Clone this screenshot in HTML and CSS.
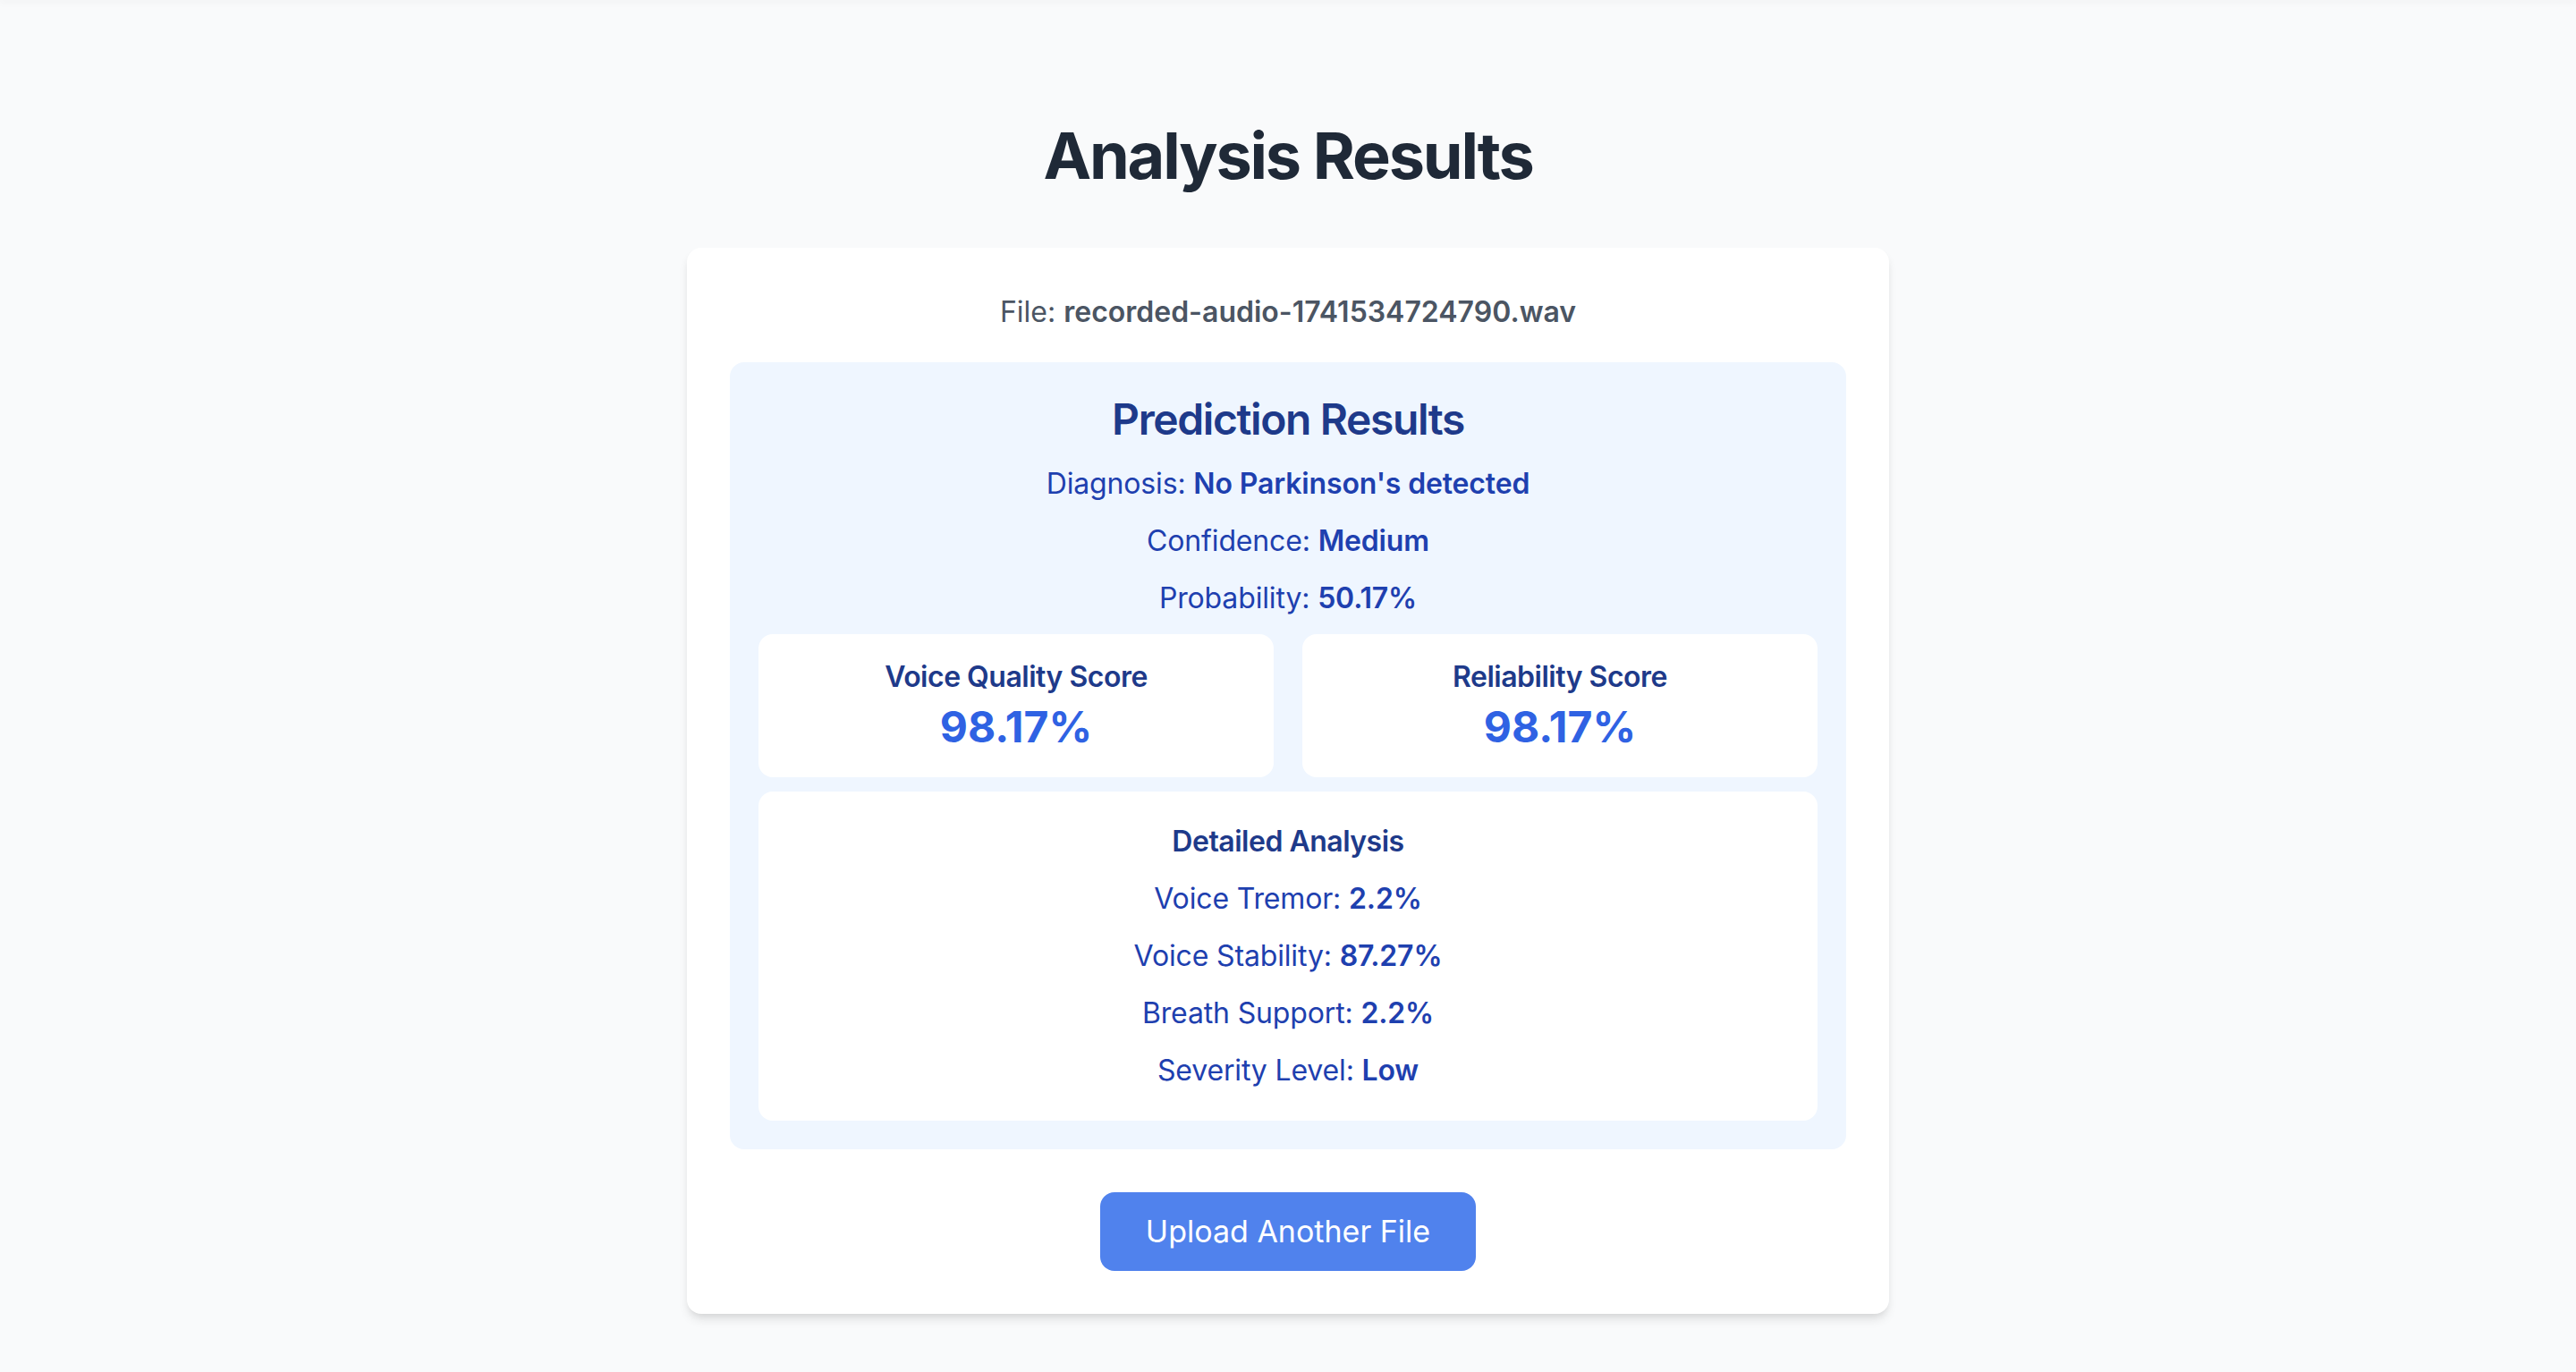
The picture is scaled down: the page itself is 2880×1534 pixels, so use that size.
FILE: index.html
```html
<!DOCTYPE html>
<html lang="en">
<head>
<meta charset="utf-8">
<title>Analysis Results</title>
<link rel="stylesheet" href="styles.css">
</head>
<body>
<div class="topbar"></div>
<main class="page">
  <h1 class="title">Analysis Results</h1>
  <section class="card">
    <p class="file">File: <strong>recorded-audio-1741534724790.wav</strong></p>
    <div class="results">
      <h2 class="results-title">Prediction Results</h2>
      <p class="line">Diagnosis: <strong>No Parkinson's detected</strong></p>
      <p class="line">Confidence: <strong>Medium</strong></p>
      <p class="line">Probability: <strong>50.17%</strong></p>
      <div class="scores">
        <div class="score">
          <div class="score-label">Voice Quality Score</div>
          <div class="score-value">98.17%</div>
        </div>
        <div class="score">
          <div class="score-label">Reliability Score</div>
          <div class="score-value">98.17%</div>
        </div>
      </div>
      <div class="details">
        <h3 class="details-title">Detailed Analysis</h3>
        <p class="line">Voice Tremor: <strong>2.2%</strong></p>
        <p class="line">Voice Stability: <strong>87.27%</strong></p>
        <p class="line">Breath Support: <strong>2.2%</strong></p>
        <p class="line">Severity Level: <strong>Low</strong></p>
      </div>
    </div>
    <div class="actions">
      <button class="btn" type="button">Upload Another File</button>
    </div>
  </section>
</main>
</body>
</html>
```

FILE: styles.css
```css
* { box-sizing: border-box; }

html, body {
  margin: 0;
  padding: 0;
}

body {
  background: #f9fafb;
  font-family: Inter, "Noto Sans", "Liberation Sans", sans-serif;
  min-height: 1534px;
}

.topbar {
  height: 0;
  box-shadow: 0 0 8px 2px rgba(0, 0, 0, 0.05);
}

.page {
  display: flex;
  flex-direction: column;
  align-items: center;
  padding-top: 134px;
}

.title {
  margin: 0 0 63px;
  font-size: 72px;
  line-height: 80px;
  font-weight: 700;
  letter-spacing: -2.2px;
  color: #1f2937;
  text-align: center;
}

.card {
  width: 1344px;
  background: #ffffff;
  border-radius: 16px;
  padding: 48px;
  box-shadow: 0 8px 12px -2px rgba(0, 0, 0, 0.1), 0 4px 8px -4px rgba(0, 0, 0, 0.1);
}

.file {
  margin: 0 0 32px;
  text-align: center;
  font-size: 32px;
  line-height: 48px;
  color: #4b5563;
}

.file strong { font-weight: 600; }

.results {
  background: #eff6ff;
  border-radius: 16px;
  padding: 32px;
  display: flex;
  flex-direction: column;
  gap: 16px;
  text-align: center;
}

.results-title {
  margin: 0;
  font-size: 48px;
  line-height: 64px;
  font-weight: 600;
  letter-spacing: -1.4px;
  color: #1e3a8a;
}

.line {
  margin: 0;
  font-size: 32px;
  line-height: 48px;
  letter-spacing: -0.15px;
  color: #1e40af;
}

.line strong { font-weight: 600; }

.scores {
  display: grid;
  grid-template-columns: 1fr 1fr;
  gap: 32px;
}

.score {
  background: #ffffff;
  border-radius: 16px;
  padding: 24px;
}

.score-label {
  font-size: 32px;
  line-height: 48px;
  font-weight: 600;
  letter-spacing: -0.5px;
  color: #1e3a8a;
}

.score-value {
  font-size: 48px;
  line-height: 64px;
  font-weight: 700;
  color: #2f62e3;
}

.details {
  background: #ffffff;
  border-radius: 16px;
  padding: 32px;
  display: flex;
  flex-direction: column;
  gap: 16px;
}

.details-title {
  margin: 0;
  font-size: 32px;
  line-height: 48px;
  font-weight: 600;
  letter-spacing: -0.5px;
  color: #1e3a8a;
}

.actions {
  margin-top: 48px;
  display: flex;
  justify-content: center;
}

.btn {
  font-family: inherit;
  font-size: 34px;
  line-height: 48px;
  font-weight: 400;
  color: #ffffff;
  background: #5082ed;
  border: none;
  border-radius: 16px;
  padding: 20px 51px;
  cursor: pointer;
}
```
